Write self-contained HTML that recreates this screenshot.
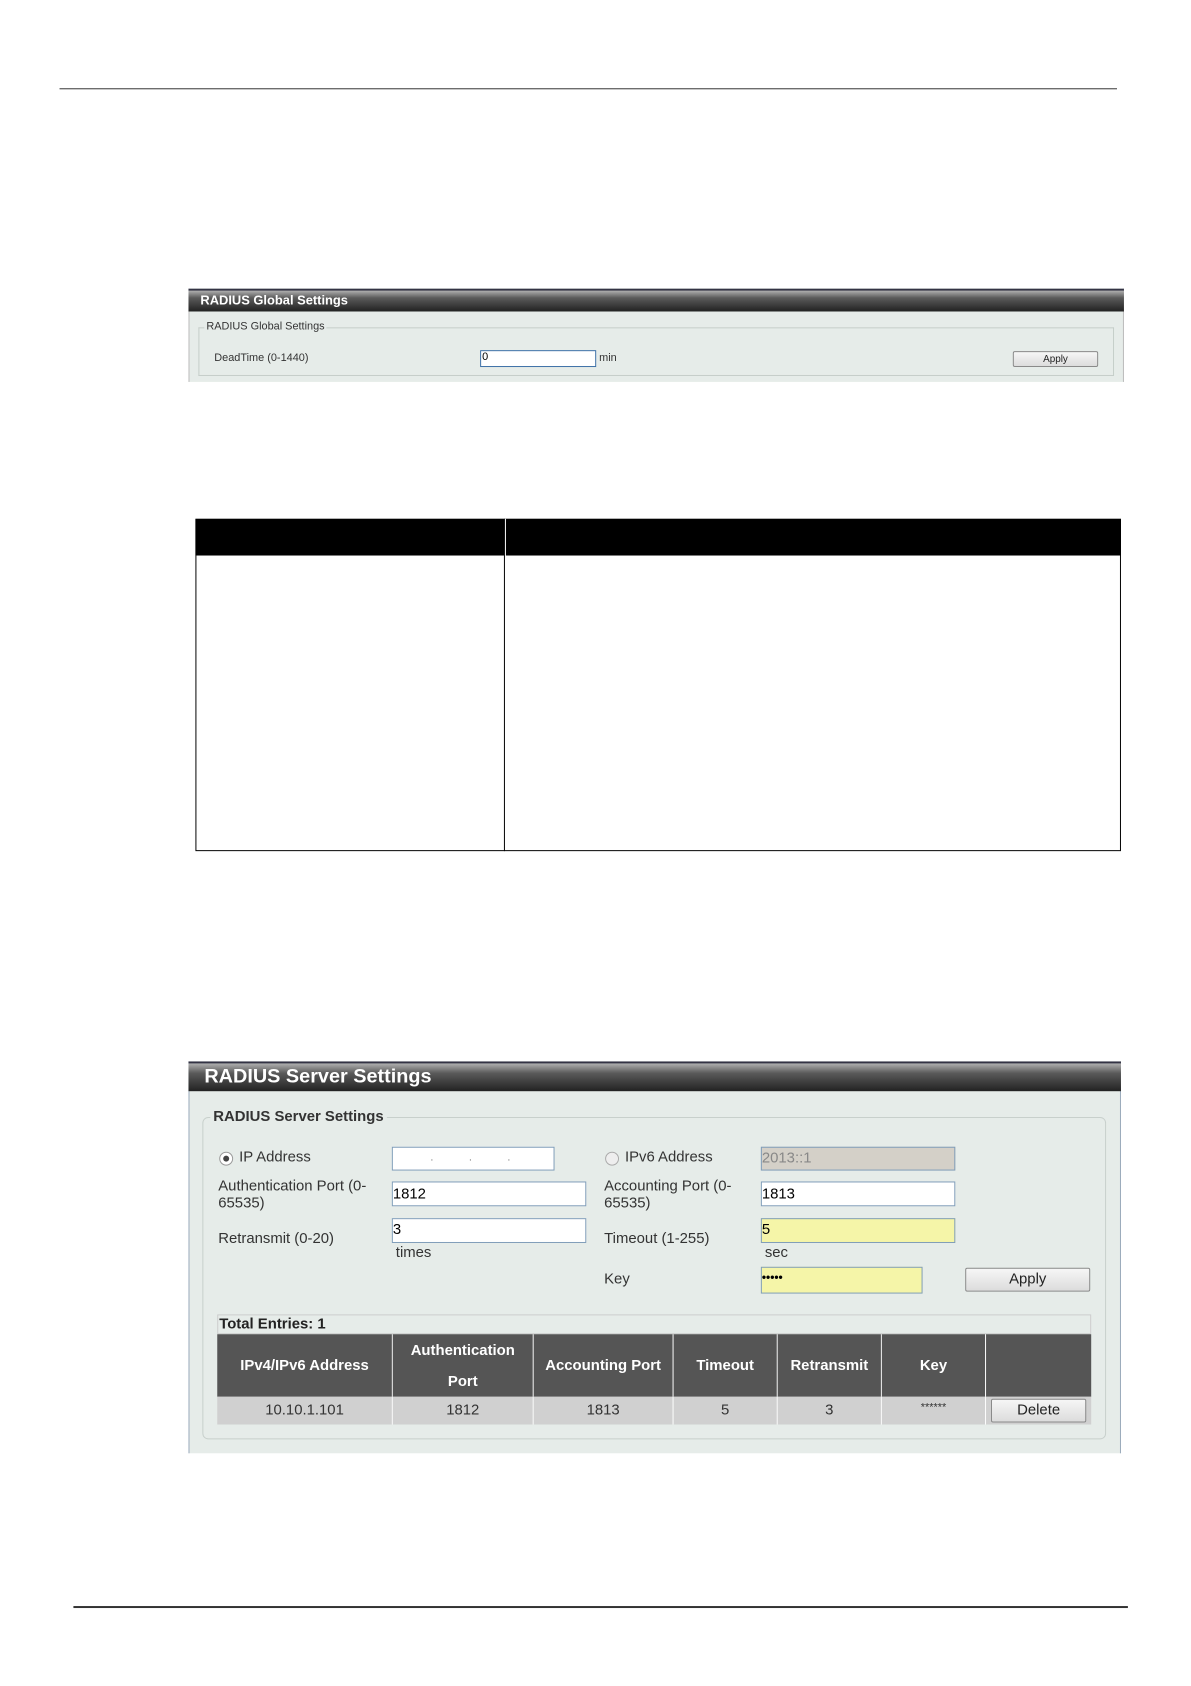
<!DOCTYPE html>
<html><head><meta charset="utf-8"><style>
body{margin:0;width:1191px;height:1684px;background:#fff;position:relative;font-family:"Liberation Sans",sans-serif;overflow:hidden}
#w{position:absolute;left:0;top:0;width:1200px;height:1700px;transform:scale(0.992);transform-origin:0 0}
#w div{position:absolute;box-sizing:border-box}
.hdr{background:linear-gradient(#b0b0b0,#5a5a5a 35%,#222 100%);color:#fff;font-weight:bold}
.inp{background:#fff;border:1px solid #7f9db9}
.btn{background:linear-gradient(#f6f6f6,#dcdcdc);border:1px solid #8a8a8a;border-radius:2px;text-align:center;color:#222}
.t{color:#333;white-space:nowrap}
.th{background:#555;color:#fff;font-weight:bold;font-size:15px;text-align:center;border-right:1px solid #fff;display:flex;align-items:center;justify-content:center;line-height:31px}
.td{background:#d0d0d0;color:#333;font-size:15px;text-align:center;border-right:1px solid #fff;line-height:28px}
</style></head><body><div id="w">
<div style="left:60px;top:89px;width:1066px;height:1px;background:#333"></div>
<div style="left:74px;top:1619px;width:1063px;height:2px;background:#333"></div>

<div style="left:190px;top:291px;width:943px;height:94px;background:#e6ece9;border-left:1px solid #bbb;border-right:1px solid #bbb"></div>
<div class="hdr" style="left:190px;top:291px;width:943px;height:23px;font-size:13px;padding:2px 12px;border-top:2px solid #334">RADIUS Global Settings</div>
<div style="left:200px;top:330px;width:923px;height:49px;border:1px solid #c5cec9;border-top:none"></div>
<div style="left:200px;top:330px;width:923px;height:1px;background:#c5cec9"></div>
<div class="t" style="left:206px;top:323px;font-size:11px;background:#e6ece9;padding:0 2px">RADIUS Global Settings</div>
<div class="t" style="left:216px;top:355px;font-size:11px">DeadTime (0-1440)</div>
<div class="inp" style="left:484px;top:353px;width:117px;height:17px;font-size:11px;padding-left:1px;border-color:#3a6ea5">0</div>
<div class="t" style="left:604px;top:355px;font-size:11px">min</div>
<div class="btn" style="left:1021px;top:354px;width:86px;height:16px;font-size:10px;line-height:16px">Apply</div>

<div style="left:197px;top:523px;width:933px;height:335px;border:1px solid #000"></div>
<div style="left:197px;top:523px;width:933px;height:37px;background:#000"></div>
<div style="left:508px;top:523px;width:1px;height:335px;background:#000"></div>
<div style="left:509px;top:523px;width:1px;height:37px;background:#fff"></div>

<div style="left:190px;top:1070px;width:940px;height:395px;background:#e6ece9;border-left:1px solid #9ab;border-right:1px solid #9ab"></div>
<div class="hdr" style="left:190px;top:1070px;width:940px;height:30px;font-size:20px;padding:2px 16px;border-top:2px solid #334">RADIUS Server Settings</div>
<div style="left:204px;top:1126px;width:911px;height:325px;border:1px solid #c8d0cc;border-radius:6px"></div>
<div class="t" style="left:212px;top:1117px;font-size:15px;font-weight:bold;background:#e6ece9;padding:0 3px">RADIUS Server Settings</div>

<div style="left:221px;top:1161px;width:14px;height:14px;border-radius:50%;border:1px solid #999;background:#fff"></div>
<div style="left:225px;top:1165px;width:6px;height:6px;border-radius:50%;background:#444"></div>
<div class="t" style="left:241px;top:1158px;font-size:15px">IP Address</div>
<div class="inp" style="left:395px;top:1156px;width:164px;height:24px;font-size:10px;color:#666;letter-spacing:36px;padding-left:38px;line-height:22px">...</div>
<div style="left:610px;top:1161px;width:14px;height:14px;border-radius:50%;border:1px solid #aaa;background:#eee"></div>
<div class="t" style="left:630px;top:1158px;font-size:15px">IPv6 Address</div>
<div class="inp" style="left:767px;top:1156px;width:196px;height:24px;background:#d4d0c8;color:#888;font-size:15px;line-height:22px">2013::1</div>

<div class="t" style="left:220px;top:1187px;font-size:15px;line-height:17px">Authentication Port (0-<br>65535)</div>
<div class="inp" style="left:395px;top:1191px;width:196px;height:25px;font-size:15px;line-height:23px">1812</div>
<div class="t" style="left:609px;top:1187px;font-size:15px;line-height:17px">Accounting Port (0-<br>65535)</div>
<div class="inp" style="left:767px;top:1191px;width:196px;height:25px;font-size:15px;line-height:23px">1813</div>

<div class="t" style="left:220px;top:1240px;font-size:15px">Retransmit (0-20)</div>
<div class="inp" style="left:395px;top:1228px;width:196px;height:25px;font-size:15px;line-height:21px">3</div>
<div class="t" style="left:399px;top:1254px;font-size:15px">times</div>
<div class="t" style="left:609px;top:1240px;font-size:15px">Timeout (1-255)</div>
<div class="inp" style="left:767px;top:1228px;width:196px;height:25px;font-size:15px;line-height:21px;background:#f5f5a8">5</div>
<div class="t" style="left:771px;top:1254px;font-size:15px">sec</div>

<div class="t" style="left:609px;top:1281px;font-size:15px">Key</div>
<div class="inp" style="left:767px;top:1277px;width:163px;height:27px;font-size:12px;line-height:20px;background:#f5f5a8;font-weight:bold">•••••</div>
<div class="btn" style="left:973px;top:1278px;width:126px;height:24px;font-size:15px;line-height:22px">Apply</div>

<div style="left:219px;top:1325px;width:881px;height:20px;border:1px solid #ccc"></div>
<div class="t" style="left:221px;top:1326px;font-size:15px;font-weight:bold;color:#222">Total Entries: 1</div>

<div class="th" style="left:219px;top:1345px;width:177px;height:63px">IPv4/IPv6 Address</div>
<div class="th" style="left:396px;top:1345px;width:142px;height:63px">Authentication<br>Port</div>
<div class="th" style="left:538px;top:1345px;width:141px;height:63px">Accounting Port</div>
<div class="th" style="left:679px;top:1345px;width:105px;height:63px">Timeout</div>
<div class="th" style="left:784px;top:1345px;width:105px;height:63px">Retransmit</div>
<div class="th" style="left:889px;top:1345px;width:105px;height:63px">Key</div>
<div class="th" style="left:994px;top:1345px;width:106px;height:63px;border-right:none"></div>

<div class="td" style="left:219px;top:1408px;width:177px;height:28px">10.10.1.101</div>
<div class="td" style="left:396px;top:1408px;width:142px;height:28px">1812</div>
<div class="td" style="left:538px;top:1408px;width:141px;height:28px">1813</div>
<div class="td" style="left:679px;top:1408px;width:105px;height:28px">5</div>
<div class="td" style="left:784px;top:1408px;width:105px;height:28px">3</div>
<div class="td" style="left:889px;top:1408px;width:105px;height:28px;font-size:11px;line-height:22px">******</div>
<div class="td" style="left:994px;top:1408px;width:106px;height:28px;border-right:none"></div>
<div class="btn" style="left:999px;top:1410px;width:96px;height:24px;font-size:15px;line-height:22px">Delete</div>
</div></body></html>
